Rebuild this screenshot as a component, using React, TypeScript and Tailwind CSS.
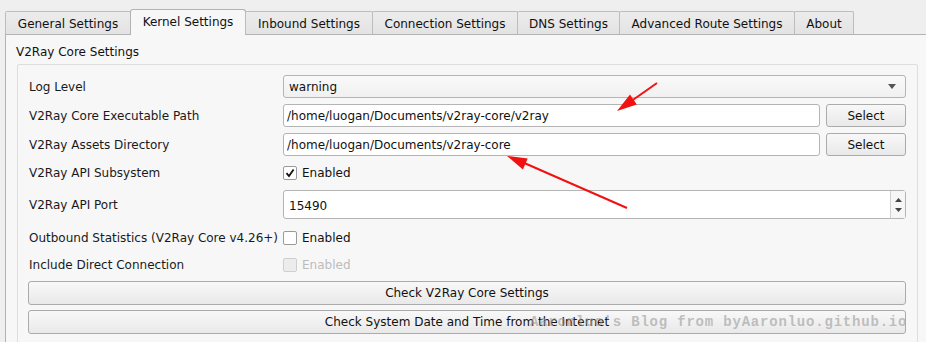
import React from "react";

const tabs = [
  { label: "General Settings", w: "w-[126px]" },
  { label: "Kernel Settings", w: "w-[116px]", active: true },
  { label: "Inbound Settings", w: "w-[128px]" },
  { label: "Connection Settings", w: "w-[146px]" },
  { label: "DNS Settings", w: "w-[103px]" },
  { label: "Advanced Route Settings", w: "w-[176px]" },
  { label: "About", w: "w-[60px]" },
];

// -------- SMALL CONTROLS --------

function Checkbox({ checked, disabled }: { checked?: boolean; disabled?: boolean }) {
  return (
    <span
      className={
        disabled
          ? "flex h-[14px] w-[14px] items-center justify-center rounded-[2px] border border-[#cfcfcf] bg-[#ececec]"
          : "flex h-[14px] w-[14px] items-center justify-center rounded-[2px] border border-[#9a9a9a] bg-white"
      }
    >
      {checked && (
        <svg width="10" height="10" viewBox="0 0 10 10">
          <path d="M1.5 5.2 L4 8 L8.6 1.5" fill="none" stroke="#111" strokeWidth="1.8" />
        </svg>
      )}
    </span>
  );
}

function TextField({ value }: { value: string }) {
  return (
    <div className="flex h-[23px] flex-1 items-center rounded-[3px] border border-[#b4b4b4] bg-white pl-[3px] text-[#111]">
      {value}
    </div>
  );
}

function PushButton({ children, className }: { children: React.ReactNode; className: string }) {
  return (
    <div
      className={
        "flex items-center justify-center rounded-[3px] border border-[#ababab] bg-gradient-to-b from-[#f8f8f8] to-[#e9e9e9] text-[#111] " +
        className
      }
    >
      {children}
    </div>
  );
}

function Row({ label, className, children }: { label: string; className: string; children: React.ReactNode }) {
  return (
    <div className={"flex items-center " + className}>
      <span className="w-[254px] shrink-0 whitespace-nowrap text-[#1a1a1a]">{label}</span>
      <div className="flex flex-1 items-center">{children}</div>
    </div>
  );
}

// ----------- MAIN COMPONENT ---------

export default function App() {
  return (
    <div
      className="relative h-[342px] w-[926px] overflow-hidden bg-[#efefef] text-[12px] leading-[14px]"
      style={{ fontFamily: '"DejaVu Sans", sans-serif' }}
    >
      {/* tab bar */}
      <div className="relative z-10 flex h-[34px] items-end pl-[5px]">
        {tabs.map((tab) =>
          tab.active ? (
            <div
              key={tab.label}
              className={
                tab.w +
                " -mb-px -mr-px flex h-[26px] items-center justify-center rounded-t-[3px] border-x border-t border-[#b3b3b3] bg-[#f7f7f7] pb-[2px] text-[#111]"
              }
            >
              {tab.label}
            </div>
          ) : (
            <div
              key={tab.label}
              className={
                tab.w +
                " -mr-px flex h-[23px] items-center justify-center rounded-t-[2px] border-x border-t border-[#bdbdbd] bg-gradient-to-b from-[#ececec] to-[#e3e3e3] pt-[2px] text-[#111]"
              }
            >
              {tab.label}
            </div>
          )
        )}
      </div>

      {/* pane */}
      <div className="ml-[5px] h-[308px] border-l border-t border-[#b3b3b3] bg-[#f7f7f7]">
        <div className="pl-[10px] pt-[10px] text-[#111]">V2Ray Core Settings</div>

        <div className="ml-[11px] mr-[8px] mt-[5px] h-[300px] rounded-[2px] border border-[#dedede] pl-[10px] pr-[11px] pt-[10px]">
          <Row label="Log Level" className="ml-px h-[23px]">
            <div className="flex h-[23px] flex-1 items-center justify-between rounded-[3px] border border-[#b4b4b4] bg-gradient-to-b from-[#fafafa] to-[#f0f0f0] pl-[5px] pr-[9px] text-[#111]">
              <span>warning</span>
              <svg width="8" height="5" viewBox="0 0 8 5">
                <path d="M0 0 H8 L4 5 Z" fill="#555" />
              </svg>
            </div>
          </Row>

          <Row label="V2Ray Core Executable Path" className="ml-px mt-[6px] h-[23px]">
            <TextField value="/home/luogan/Documents/v2ray-core/v2ray" />
            <PushButton className="ml-[6px] h-[23px] w-[80px]">Select</PushButton>
          </Row>

          <Row label="V2Ray Assets Directory" className="ml-px mt-[6px] h-[23px]">
            <TextField value="/home/luogan/Documents/v2ray-core" />
            <PushButton className="ml-[6px] h-[23px] w-[80px]">Select</PushButton>
          </Row>

          <Row label="V2Ray API Subsystem" className="ml-px mt-[7px] h-[20px]">
            <Checkbox checked />
            <span className="ml-[5px] text-[#111]">Enabled</span>
          </Row>

          <Row label="V2Ray API Port" className="ml-px mt-[7px] h-[29px]">
            <div className="flex h-[29px] flex-1 rounded-[3px] border border-[#b4b4b4] bg-white">
              <div className="flex flex-1 items-center pl-[5px] pt-[2px] text-[#111]">15490</div>
              <div className="flex w-[15px] flex-col items-center justify-center gap-[6px] border-l border-[#d0d0d0] bg-[#f6f6f6]">
                <svg width="7" height="4" viewBox="0 0 7 4">
                  <path d="M0 4 H7 L3.5 0 Z" fill="#444" />
                </svg>
                <svg width="7" height="4" viewBox="0 0 7 4">
                  <path d="M0 0 H7 L3.5 4 Z" fill="#444" />
                </svg>
              </div>
            </div>
          </Row>

          <Row label="Outbound Statistics (V2Ray Core v4.26+)" className="ml-px mt-[9px] h-[20px]">
            <Checkbox />
            <span className="ml-[5px] text-[#111]">Enabled</span>
          </Row>

          <Row label="Include Direct Connection" className="ml-px mt-[7px] h-[20px]">
            <Checkbox disabled />
            <span className="ml-[5px] text-[#bcbcbc]">Enabled</span>
          </Row>

          <PushButton className="mt-[6px] h-[24px]">Check V2Ray Core Settings</PushButton>
          <PushButton className="relative mt-[5px] h-[24px] overflow-hidden">
            Check System Date and Time from the Internet
            <span
              className="absolute left-[501px] top-[3px] whitespace-pre text-[14px] font-bold leading-[17px] tracking-[0.8px] text-[#9a9a9a]/60"
              style={{ fontFamily: '"Liberation Mono", monospace' }}
            >
              Aaronluo's Blog from byAaronluo.github.io
            </span>
          </PushButton>
        </div>
      </div>

      {/* annotation arrows */}
      <svg className="pointer-events-none absolute left-0 top-0" width="926" height="342" viewBox="0 0 926 342">
        <line x1="657" y1="83" x2="630" y2="102" stroke="#f21111" strokeWidth="2" />
        <path d="M617 111 L636.8 104.4 L630 94.6 Z" fill="#f21111" />
        <line x1="627" y1="208" x2="522" y2="162" stroke="#f21111" strokeWidth="2" />
        <path d="M507 156 L527.7 158.5 L522.9 169.5 Z" fill="#f21111" />
      </svg>
    </div>
  );
}
